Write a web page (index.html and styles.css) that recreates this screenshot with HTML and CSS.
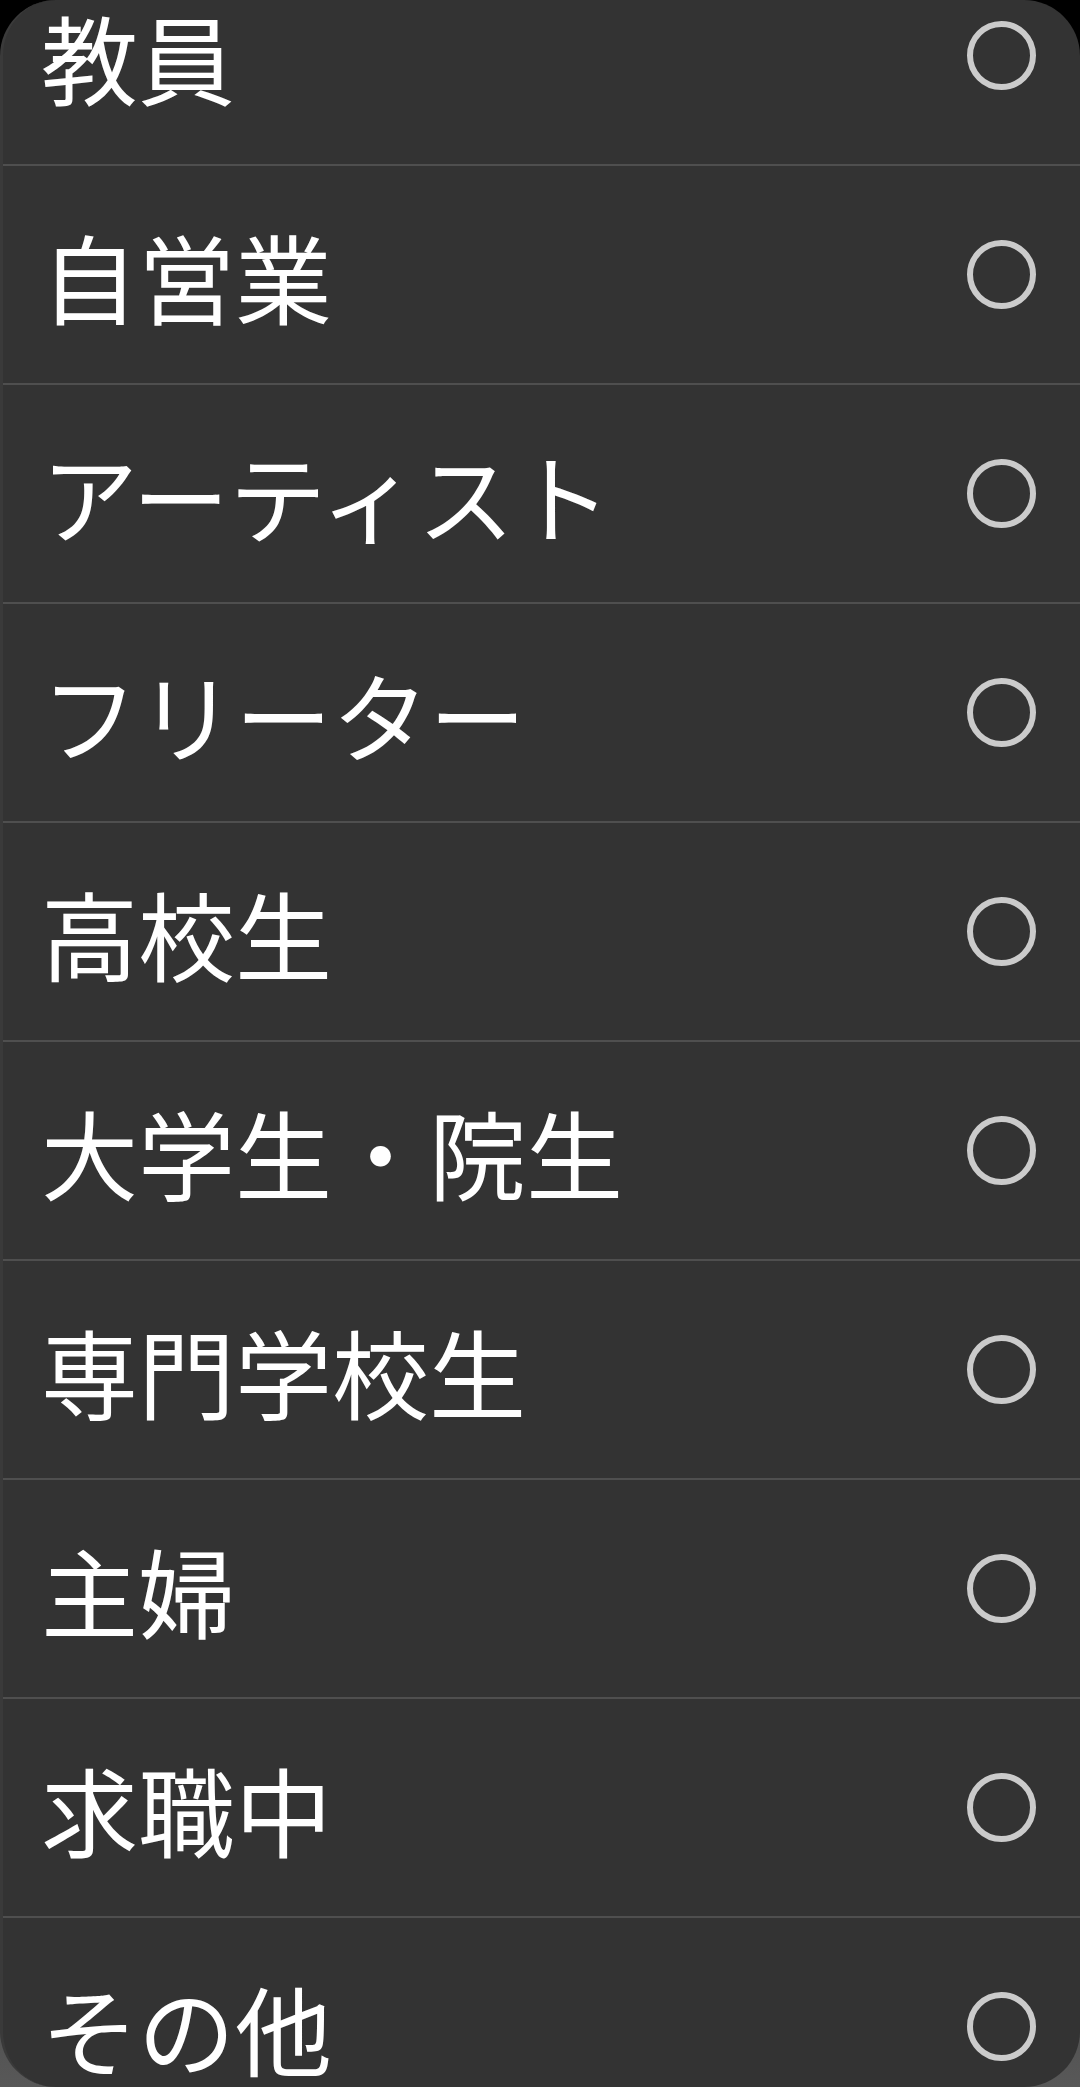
FILE: index.html
```html
<!DOCTYPE html>
<html lang="ja">
<head>
<meta charset="utf-8">
<link rel="stylesheet" href="styles.css">
</head>
<body>
<div class="sheet">
  <ul class="list">
    <li class="row"><span class="label">教員</span><span class="radio"></span></li>
    <li class="row"><span class="label">自営業</span><span class="radio"></span></li>
    <li class="row"><span class="label">アーティスト</span><span class="radio"></span></li>
    <li class="row"><span class="label">フリーター</span><span class="radio"></span></li>
    <li class="row"><span class="label">高校生</span><span class="radio"></span></li>
    <li class="row"><span class="label">大学生・院生</span><span class="radio"></span></li>
    <li class="row"><span class="label">専門学校生</span><span class="radio"></span></li>
    <li class="row"><span class="label">主婦</span><span class="radio"></span></li>
    <li class="row"><span class="label">求職中</span><span class="radio"></span></li>
    <li class="row"><span class="label">その他</span><span class="radio"></span></li>
  </ul>
</div>
</body>
</html>
```
FILE: styles.css
```css
html, body {
  margin: 0;
  padding: 0;
}
body {
  width: 1080px;
  height: 2087px;
  background: linear-gradient(#000 0%, #000 55%, #585858 100%);
  font-family: "Noto Sans CJK JP", "Noto Sans", sans-serif;
  overflow: hidden;
}
.sheet {
  width: 1080px;
  height: 2087px;
  background: #333333;
  border-radius: 56px;
  overflow: hidden;
  box-sizing: border-box;
  border-left: 3px solid #3a3a3a;
}
.list {
  list-style: none;
  margin: -53px 0 0 0;
  padding: 0;
}
.row {
  height: 217px;
  border-bottom: 2px solid #4f4f4f;
  display: flex;
  align-items: center;
  justify-content: space-between;
  padding: 0 44px 0 38px;
}
.label {
  color: #ffffff;
  font-size: 97px;
  line-height: 1;
  letter-spacing: 0;
}
.radio {
  width: 69px;
  height: 69px;
  box-sizing: border-box;
  border: 6px solid #cbcbcb;
  border-radius: 50%;
  flex: none;
}
```
